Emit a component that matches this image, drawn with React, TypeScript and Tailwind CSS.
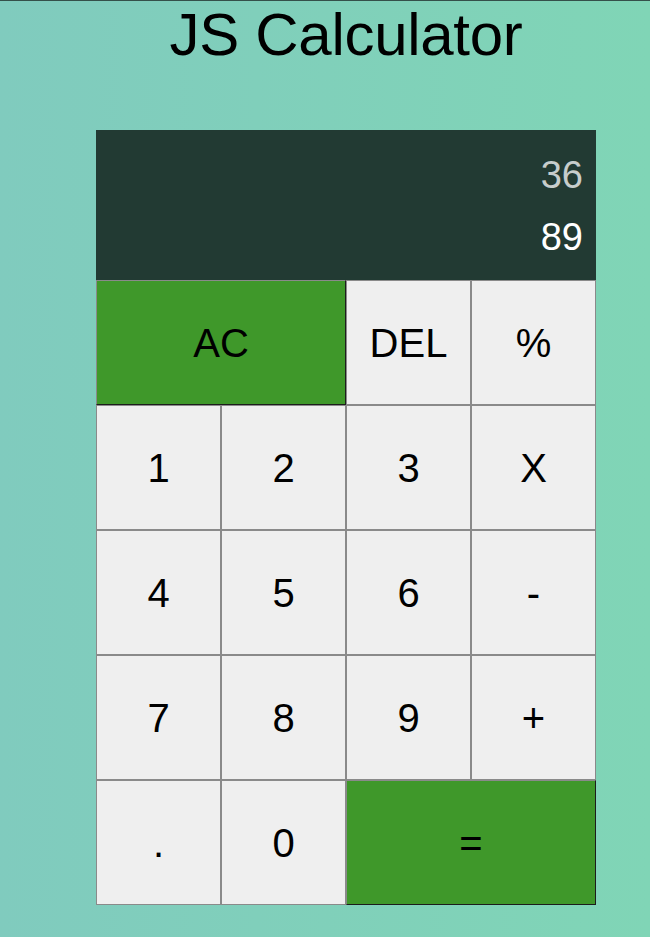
import React from "react";

const keys = [
  { label: "AC", span: true, green: true },
  { label: "DEL" },
  { label: "%" },
  { label: "1" },
  { label: "2" },
  { label: "3" },
  { label: "X" },
  { label: "4" },
  { label: "5" },
  { label: "6" },
  { label: "-" },
  { label: "7" },
  { label: "8" },
  { label: "9" },
  { label: "+" },
  { label: "." },
  { label: "0" },
  { label: "=", span: true, green: true },
];

const App = () => {
  return (
    <div
      className="min-h-screen w-full border-t border-[#34504a] bg-gradient-to-r from-[#80cbbe] to-[#80d5b6] pl-[42px] flex flex-col items-center"
      style={{ fontFamily: '"Liberation Sans", Arial, sans-serif' }}
    >
      <h1 className="text-[60px] leading-[68px] font-normal text-black tracking-[-0.3px]">JS Calculator</h1>

      <div className="mt-[61px] grid w-[500px] grid-cols-4 grid-rows-[150px_repeat(5,125px)]">
        <div className="col-span-4 bg-[#223a33] flex flex-col items-end pt-[23px] pr-[13px] gap-[18px]">
          <div className="text-[38px] leading-[44px] text-white/75">36</div>
          <div className="text-[38px] leading-[44px] text-white">89</div>
        </div>
        {keys.map((k) => (
          <button
            key={k.label}
            className={
              k.green
                ? "col-span-2 border border-[#8a8a8a] border-r-[#1c1c1c] border-b-[#1c1c1c] bg-[#3f982a] text-[40px] text-black"
                : "border border-[#8a8a8a] bg-[#efefef] text-[40px] text-black"
            }
          >
            {k.label}
          </button>
        ))}
      </div>
    </div>
  );
};

export default App;
